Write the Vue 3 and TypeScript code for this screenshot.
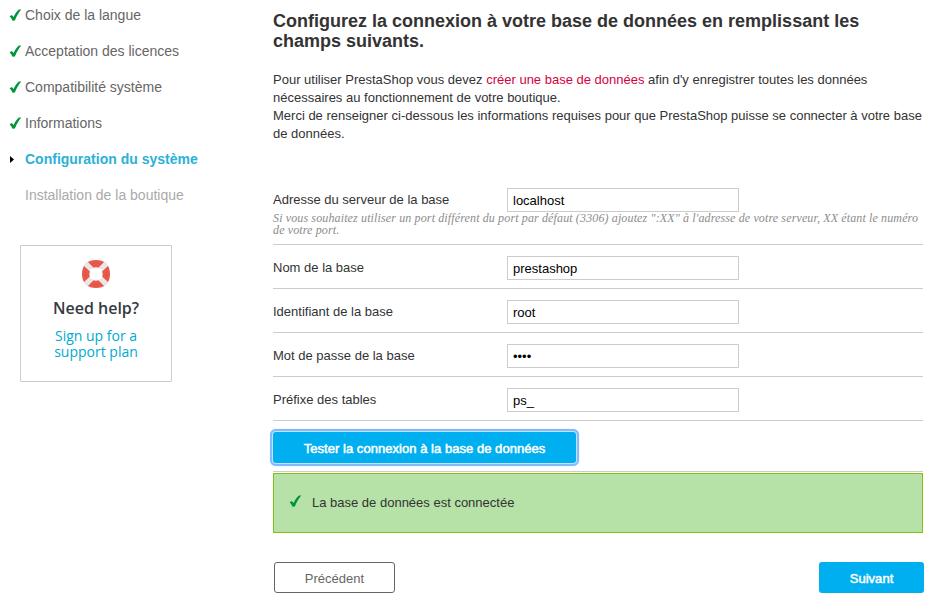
<script setup lang="ts">
import { ref } from 'vue'

type StepState = 'done' | 'current' | 'todo'

interface Step {
  label: string
  state: StepState
}

interface Field {
  id: string
  label: string
  type: 'text' | 'password'
  value: string
  hint?: string[]
}

const steps: Step[] = [
  { label: 'Choix de la langue', state: 'done' },
  { label: 'Acceptation des licences', state: 'done' },
  { label: 'Compatibilité système', state: 'done' },
  { label: 'Informations', state: 'done' },
  { label: 'Configuration du système', state: 'current' },
  { label: 'Installation de la boutique', state: 'todo' },
]

const fields = ref<Field[]>([
  {
    id: 'server',
    label: 'Adresse du serveur de la base',
    type: 'text',
    value: 'localhost',
    hint: [
      'Si vous souhaitez utiliser un port différent du port par défaut (3306) ajoutez ":XX" à l\'adresse de votre serveur, XX étant le numéro',
      'de votre port.',
    ],
  },
  { id: 'name', label: 'Nom de la base', type: 'text', value: 'prestashop' },
  { id: 'login', label: 'Identifiant de la base', type: 'text', value: 'root' },
  { id: 'password', label: 'Mot de passe de la base', type: 'password', value: 'root' },
  { id: 'prefix', label: 'Préfixe des tables', type: 'text', value: 'ps_' },
])

const checkPath = 'M0.6 7.3L2.9 5.9L4.6 8.1C6 5 7.8 2.4 9.9 0.6L12.2 0.5C9.6 3.8 7.4 7.5 5.9 11.6L3.5 11.8C2.8 10.1 1.8 8.6 0.6 7.3Z'
</script>

<template>
  <div class="installer">
    <aside class="sidebar">
      <ol class="steps">
        <li v-for="step in steps" :key="step.label" class="step" :class="step.state">
          <span class="marker">
            <svg v-if="step.state === 'done'" class="check" viewBox="0 0 12 13">
              <path :d="checkPath" />
            </svg>
            <svg v-else-if="step.state === 'current'" class="arrow" viewBox="0 0 4 7">
              <path d="M0 0L4 3.5L0 7Z" />
            </svg>
          </span>
          <span class="step-label">{{ step.label }}</span>
        </li>
      </ol>

      <div class="help">
        <svg class="buoy" viewBox="0 0 30 30">
          <path d="M15 1C19 1 22.4 1.9 25.3 4.7C28.1 7.6 29 11 29 15S28.1 22.4 25.3 25.3C22.4 28.1 19 29 15 29S7.6 28.1 4.7 25.3C1.9 22.4 1 19 1 15S1.9 7.6 4.7 4.7C7.6 1.9 11 1 15 1Z" fill="#e8594a" />
          <circle cx="15" cy="15" r="10.8" fill="none" stroke="#d94f42" stroke-width="0.5" />
          <path d="M2.6 6.4L6.4 2.6L12.6 8.8L8.8 12.6ZM23.6 2.6L27.4 6.4L21.2 12.6L17.4 8.8ZM27.4 23.6L23.6 27.4L17.4 21.2L21.2 17.4ZM6.4 27.4L2.6 23.6L8.8 17.4L12.6 21.2Z" fill="#eae7ea" />
          <circle cx="15" cy="15" r="6.7" fill="#fff" />
        </svg>
        <strong class="help-title">Need help?</strong>
        <a class="help-link">Sign up for a<br />support plan</a>
      </div>
    </aside>

    <main class="content">
      <h2 class="title">
        <span class="title-first">Configurez la connexion à votre base de données en remplissant les</span><br />
        <span>champs suivants.</span>
      </h2>

      <p class="intro">
        Pour utiliser PrestaShop vous devez <a class="doc-link">créer une base de données</a> afin d'y enregistrer toutes les données<br />
        nécessaires au fonctionnement de votre boutique.<br />
        Merci de renseigner ci-dessous les informations requises pour que PrestaShop puisse se connecter à votre base<br />
        de données.
      </p>

      <form class="form" @submit.prevent>
        <div v-for="field in fields" :key="field.id" class="row">
          <div class="control">
            <label :for="field.id">{{ field.label }}</label>
            <input :id="field.id" v-model="field.value" :type="field.type" spellcheck="false" />
          </div>
          <p v-if="field.hint" class="hint">
            <span v-for="line in field.hint" :key="line">{{ line }}</span>
          </p>
        </div>

        <div class="row test-row">
          <button type="button" class="btn primary test">Tester la connexion à la base de données</button>
        </div>

        <div class="result">
          <svg class="check" viewBox="0 0 12 13">
            <path :d="checkPath" />
          </svg>
          <span>La base de données est connectée</span>
        </div>

        <div class="actions">
          <button type="button" class="btn outline">Précédent</button>
          <button type="button" class="btn primary next">Suivant</button>
        </div>
      </form>
    </main>
  </div>
</template>

<style>
body {
  background: #fff;
}
</style>

<style scoped>
.installer {
  display: flex;
  box-sizing: border-box;
  width: 944px;
  height: 614px;
  overflow: hidden;
  background: #fff;
  color: #333;
  font-family: 'Liberation Sans', Arial, sans-serif;
  font-size: 13px;
}

.sidebar {
  flex: none;
  width: 273px;
}

.steps {
  display: flex;
  flex-direction: column;
  gap: 16px;
  margin: 0;
  padding: 5px 0 0 9px;
  list-style: none;
}

.step {
  display: flex;
  align-items: center;
  height: 20px;
  color: #666;
  font-size: 14px;
  line-height: 20px;
  white-space: nowrap;
}

.marker {
  display: flex;
  align-items: center;
  flex: none;
  width: 16px;
  height: 20px;
}

.check {
  display: block;
  flex: none;
  width: 12px;
  height: 13px;
  overflow: visible;
  fill: #00953a;
}

.arrow {
  display: block;
  width: 4px;
  height: 7px;
  margin-left: 1px;
  fill: #000;
}

.step.current {
  color: #2bb1d8;
  font-weight: bold;
}

.step.todo {
  color: #aaa;
}

.help {
  display: flex;
  flex-direction: column;
  align-items: center;
  box-sizing: border-box;
  width: 152px;
  height: 137px;
  margin: 40px 0 0 20px;
  padding-top: 13px;
  border: 1px solid #ccc;
  border-radius: 1px;
  font-family: 'Open Sans', sans-serif;
}

.buoy {
  width: 30px;
  height: 30px;
}

.help-title {
  margin-top: 8px;
  color: #363a41;
  font-size: 16px;
  font-weight: 600;
  line-height: 22px;
}

.help-link {
  margin-top: 9px;
  color: #00aad0;
  font-size: 14px;
  line-height: 16px;
  text-align: center;
}

.content {
  flex: none;
  width: 651px;
}

.title {
  margin: 0;
  padding-top: 11px;
  font-size: 18px;
  line-height: 20px;
  white-space: nowrap;
}

.intro {
  margin: 20px 0 0;
  line-height: 18px;
  white-space: nowrap;
}

.doc-link {
  color: #d4003f;
}

.form {
  margin-top: 34px;
}

.row {
  width: 650px;
  box-sizing: border-box;
  padding: 11px 0 8px;
  border-bottom: 1px solid #ccc;
}

.control {
  display: flex;
  height: 24px;
}

.control label {
  width: 234px;
  line-height: 24px;
}

.control input {
  box-sizing: border-box;
  width: 232px;
  height: 24px;
  padding: 1px 5px;
  border: 1px solid #ccc;
  border-radius: 0;
  outline: none;
  background: #fff;
  color: #000;
  font: 13px 'Liberation Sans', Arial, sans-serif;
}

.hint {
  margin: 0;
  color: #8c8c8c;
  font: italic 12px/12px 'Liberation Serif', Georgia, serif;
  letter-spacing: 0.13px;
}

.hint span {
  display: block;
  white-space: nowrap;
}

.btn {
  display: block;
  box-sizing: border-box;
  height: 31px;
  padding: 2px 0 0;
  border: 0;
  border-radius: 3px;
  font: 13px 'Liberation Sans', Arial, sans-serif;
  white-space: nowrap;
}

.primary {
  background: #00aff0;
  color: #fff;
  letter-spacing: 0.04px;
  -webkit-text-stroke: 0.5px #fff;
}

.test {
  width: 303px;
  box-shadow: 0 0 0 1px #c4e2ff, 0 0 0 3px #83bbfa, 0 0 1px 3px #83bbfa;
}

.next {
  width: 105px;
}

.outline {
  width: 121px;
  border: 1px solid #666;
  background: #fff;
  color: #666;
}

.result {
  display: flex;
  align-items: center;
  gap: 11px;
  box-sizing: border-box;
  width: 650px;
  height: 60px;
  margin-top: 1px;
  padding: 0 0 2px 15px;
  border: 1px solid #85bf12;
  background: #b6e2a7;
}

.result .check {
  margin-bottom: 2px;
}

.actions {
  display: flex;
  justify-content: space-between;
  margin: 29px 0 0 1px;
}
</style>
